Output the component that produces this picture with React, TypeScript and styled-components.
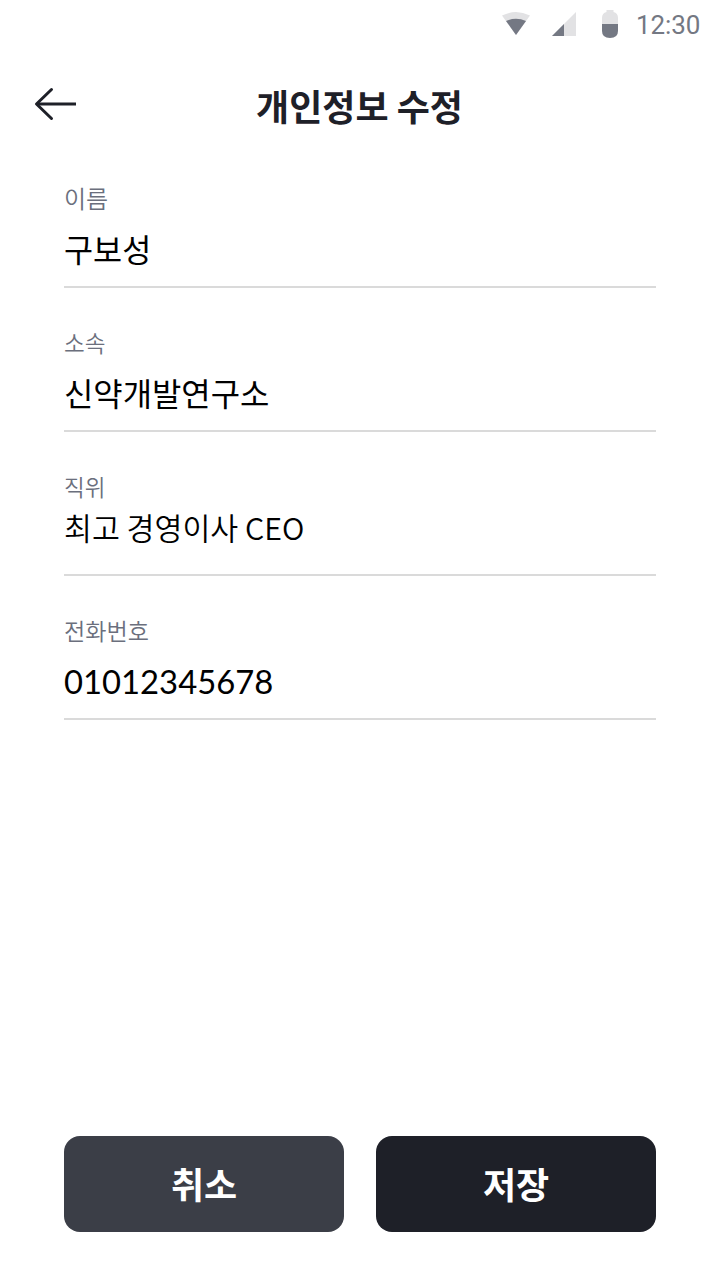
import React from "react";
import styled, { createGlobalStyle } from "styled-components";

const GlobalStyle = createGlobalStyle`
  * { box-sizing: border-box; }
  body {
    margin: 0;
    background: #fff;
    font-family: "Noto Sans CJK KR", sans-serif;
  }
`;

const Screen = styled.div`
  display: flex;
  flex-direction: column;
  width: 720px;
  height: 1280px;
  background: #fff;
`;

const StatusBar = styled.div`
  display: flex;
  justify-content: flex-end;
  align-items: center;
  height: 48px;
  padding-right: 19px;
`;

const StatusIcons = styled.svg`
  display: block;
  margin-right: 14px;
`;

const Clock = styled.span`
  width: 65px;
  height: 48px;
  padding-top: 1px;
  font: 400 26px/48px Roboto, sans-serif;
  letter-spacing: -0.1px;
  color: #747883;
`;

const Header = styled.header`
  display: grid;
  grid-template-columns: 96px 1fr 96px;
  height: 96px;
`;

const BackButton = styled.button`
  display: block;
  height: 96px;
  padding: 0;
  border: 0;
  background: none;

  svg {
    display: block;
  }
`;

const Title = styled.h1`
  margin: 0;
  padding: 9px 1px 0 0;
  text-align: center;
  font-size: 36px;
  line-height: 96px;
  font-weight: 700;
  color: #1e2028;
`;

const Form = styled.form`
  display: flex;
  flex-direction: column;
  padding: 0 64px;
`;

const Field = styled.div`
  display: flex;
  flex-direction: column;
  height: 144px;
  padding-top: 36px;
  border-bottom: 2px solid #dadada;
`;

const Label = styled.span<{ $size?: number }>`
  font-size: ${(p) => p.$size ?? 22.5}px;
  line-height: 36px;
  font-weight: 350;
  color: #6b6f7d;
`;

const Value = styled.span<{ $top?: number; $font?: string; $size?: number; $weight?: number }>`
  margin-top: ${(p) => p.$top ?? 8}px;
  font-family: ${(p) => p.$font ?? '"Noto Sans CJK KR"'}, "Noto Sans CJK KR", sans-serif;
  font-size: ${(p) => p.$size ?? 32}px;
  font-weight: ${(p) => p.$weight ?? 400};
  line-height: 48px;
  white-space: nowrap;
  color: #000;
`;

const Actions = styled.footer`
  display: flex;
  gap: 32px;
  margin-top: auto;
  padding: 0 64px 48px;
`;

const Button = styled.button<{ $primary?: boolean }>`
  flex: 1;
  height: 96px;
  padding: 0 0 2px;
  border: 0;
  border-radius: 16px;
  background: ${(p) => (p.$primary ? "#1e2028" : "#3b3e47")};
  color: #fff;
  font: 700 36px/52px "Noto Sans CJK KR", sans-serif;
`;

export default function App() {
  return (
    <Screen>
      <GlobalStyle />
      <StatusBar>
        <StatusIcons width="122" height="48" viewBox="500 0 122 48">
          <path d="M502 15.5Q516 8.5 530 15.5L516 35Z" fill="#e2e2e4" />
          <path d="M506 21Q516 16.500 526 21L516 35Z" fill="#747883" />
          <path d="M576 12V36H552Z" fill="#e2e2e4" />
          <path d="M564 24V36H552Z" fill="#747883" />
          <path d="M602 24V18Q602 13 606.500 12V10H613.500V12Q618 13 618 18V24Z" fill="#e2e2e4" />
          <path d="M602 24H618V31Q618 38 610 38Q602 38 602 31Z" fill="#747883" />
        </StatusIcons>
        <Clock>12:30</Clock>
      </StatusBar>
      <Header>
        <BackButton type="button" aria-label="뒤로">
          <svg width="96" height="96" viewBox="0 48 96 96" fill="none" stroke="#1e2028" strokeWidth="3">
            <path d="M76 104H37" />
            <path d="M51.500 89.500L36.500 104L51.500 118.500" strokeLinecap="round" strokeLinejoin="round" />
          </svg>
        </BackButton>
        <Title>개인정보 수정</Title>
      </Header>
      <Form>
        <Field>
          <Label $size={24}>이름</Label>
          <Value $size={31.6}>구보성</Value>
        </Field>
        <Field>
          <Label>소속</Label>
          <Value $size={31.9}>신약개발연구소</Value>
        </Field>
        <Field>
          <Label>직위</Label>
          <Value $top={-1} $size={30.35} $weight={350}>최고 경영이사 CEO</Value>
        </Field>
        <Field>
          <Label $size={23.1}>전화번호</Label>
          <Value $font="Lato" $size={32.8} $top={10}>01012345678</Value>
        </Field>
      </Form>
      <Actions>
        <Button type="button">취소</Button>
        <Button type="button" $primary>저장</Button>
      </Actions>
    </Screen>
  );
}
